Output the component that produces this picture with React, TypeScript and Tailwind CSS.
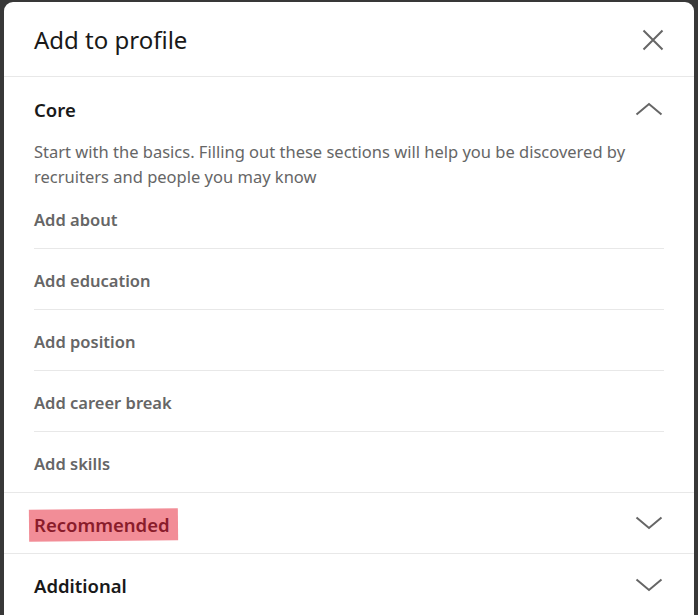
import React from "react";

const Chevron = ({ up }: { up?: boolean }) => (
  <svg width="28" height="14" viewBox="0 0 28 14" fill="none" className="shrink-0">
    {up ? (
      <path d="M1.5 12.5 L14 2 L26.5 12.5" stroke="#666666" strokeWidth="2" />
    ) : (
      <path d="M1.5 1.5 L14 12 L26.5 1.5" stroke="#666666" strokeWidth="2" />
    )}
  </svg>
);

const items = ["Add about", "Add education", "Add position", "Add career break", "Add skills"];

export default function App() {
  return (
    <div
      className="w-[698px] h-[615px] bg-[#383838] pt-[2px] pl-[4px] overflow-hidden"
      style={{ fontFamily: '"Noto Sans", "Open Sans", sans-serif' }}
    >
      <div className="w-[690px] h-[640px] bg-white rounded-[9px] flex flex-col">
        <div className="h-[75px] border-b border-[#e8e8e8] flex items-center justify-between pl-[30px] pr-[30px]">
          <span className="text-[24px] text-[#191919] leading-none pt-[2px]">Add to profile</span>
          <svg width="22" height="22" viewBox="0 0 22 22" fill="none" className="mt-[2px]">
            <path d="M1.5 1.5 L20.5 20.5 M20.5 1.5 L1.5 20.5" stroke="#666666" strokeWidth="2" />
          </svg>
        </div>

        <div className="border-b border-[#e8e8e8]">
          <div className="h-[63px] flex items-center justify-between pl-[30px] pr-[31px]">
            <span className="text-[18.5px] font-semibold text-[#191919] pt-[2px]">Core</span>
            <Chevron up />
          </div>
          <div className="px-[30px]">
            <p className="text-[16.5px] leading-[25px] text-[#666666] mt-[-1px] mb-[-1px]">
              Start with the basics. Filling out these sections will help you be discovered by recruiters and people you may know
            </p>
            <div className="flex flex-col">
              {items.map((t, i) => (
                <div
                  key={t}
                  className={`flex items-center text-[16.5px] font-semibold text-[#666666] ${
                    i < items.length - 1 ? "h-[61px] border-b border-[#e8e8e8]" : "h-[60px]"
                  }`}
                >
                  <span className="pt-[5px]">{t}</span>
                </div>
              ))}
            </div>
          </div>
        </div>

        <div className="h-[61px] border-b border-[#e8e8e8] flex items-center justify-between pl-[30px] pr-[31px]">
          <span className="relative text-[18.5px] font-semibold text-[#8a1c2b] pt-[4px]">
            <span className="absolute left-[-5px] right-[-8px] top-[2px] bottom-[-2px] bg-[#f28d97] -rotate-[0.6deg]" />
            <span className="relative">Recommended</span>
          </span>
          <Chevron />
        </div>

        <div className="h-[61px] flex items-center justify-between pl-[30px] pr-[31px]">
          <span className="text-[18.5px] font-semibold text-[#191919] pt-[2px]">Additional</span>
          <Chevron />
        </div>
      </div>
    </div>
  );
}
